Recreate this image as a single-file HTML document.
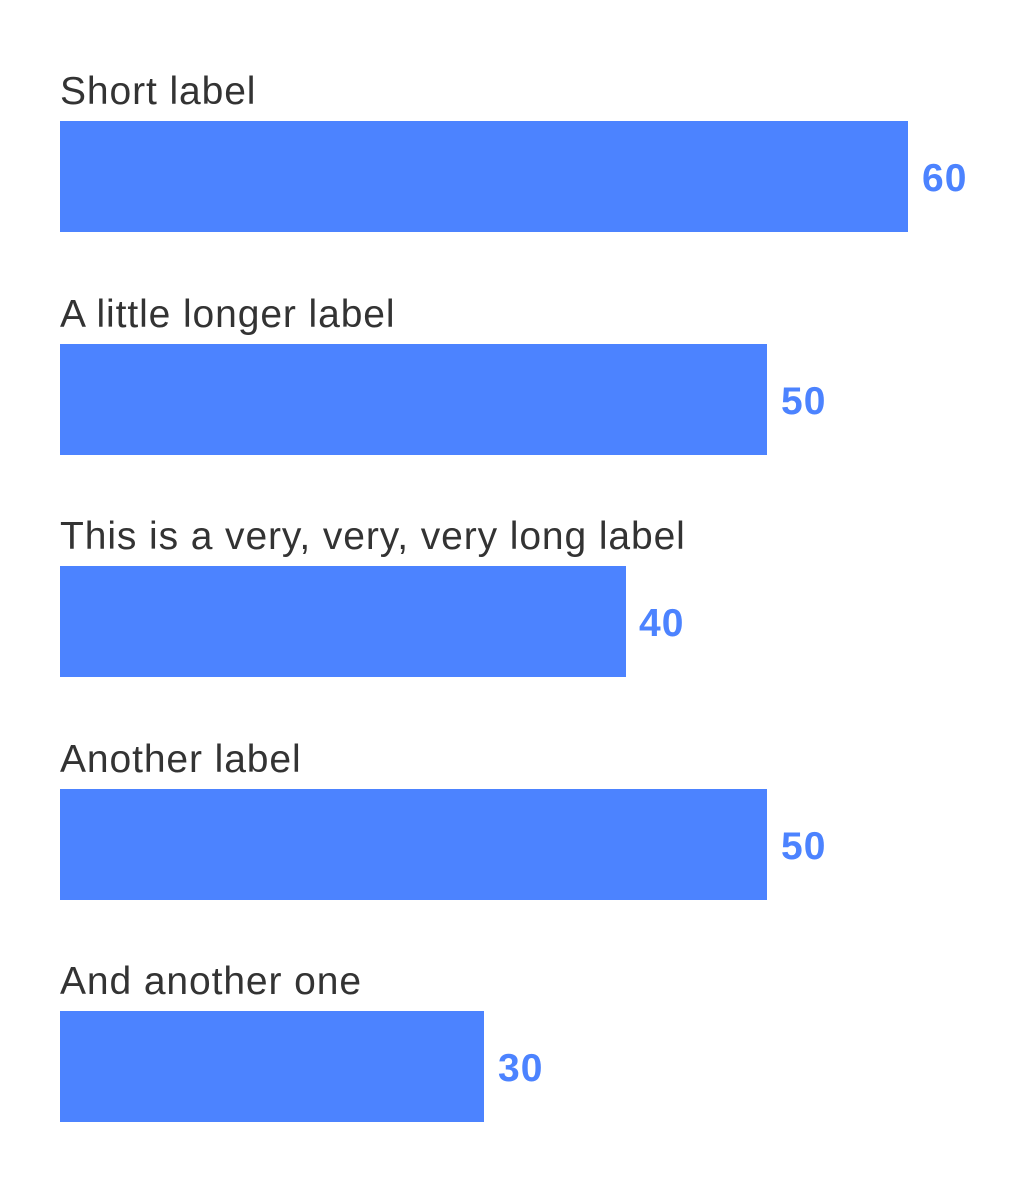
<!DOCTYPE html>
<html><head><meta charset="utf-8"><style>
html,body{margin:0;padding:0;background:#fff;width:1032px;height:1182px;overflow:hidden;font-family:"Liberation Sans",sans-serif}
.l{position:absolute;left:60px;font-size:39px;color:#333;line-height:1;white-space:nowrap;letter-spacing:0.9px}
.b{position:absolute;left:60px;height:111px;background:#4c83ff}
.v{position:absolute;font-size:39px;font-weight:bold;color:#4c83ff;line-height:1;letter-spacing:1px}
</style></head><body>
<div class="l" style="top:72px">Short label</div>
<div class="b" style="top:121px;width:848px"></div>
<div class="v" style="top:159px;left:922px">60</div>

<div class="l" style="top:295px">A little longer label</div>
<div class="b" style="top:344px;width:707px"></div>
<div class="v" style="top:382px;left:781px">50</div>

<div class="l" style="top:517px">This is a very, very, very long label</div>
<div class="b" style="top:566px;width:566px"></div>
<div class="v" style="top:604px;left:639px">40</div>

<div class="l" style="top:740px">Another label</div>
<div class="b" style="top:789px;width:707px"></div>
<div class="v" style="top:827px;left:781px">50</div>

<div class="l" style="top:962px">And another one</div>
<div class="b" style="top:1011px;width:424px"></div>
<div class="v" style="top:1049px;left:498px">30</div>
</body></html>
